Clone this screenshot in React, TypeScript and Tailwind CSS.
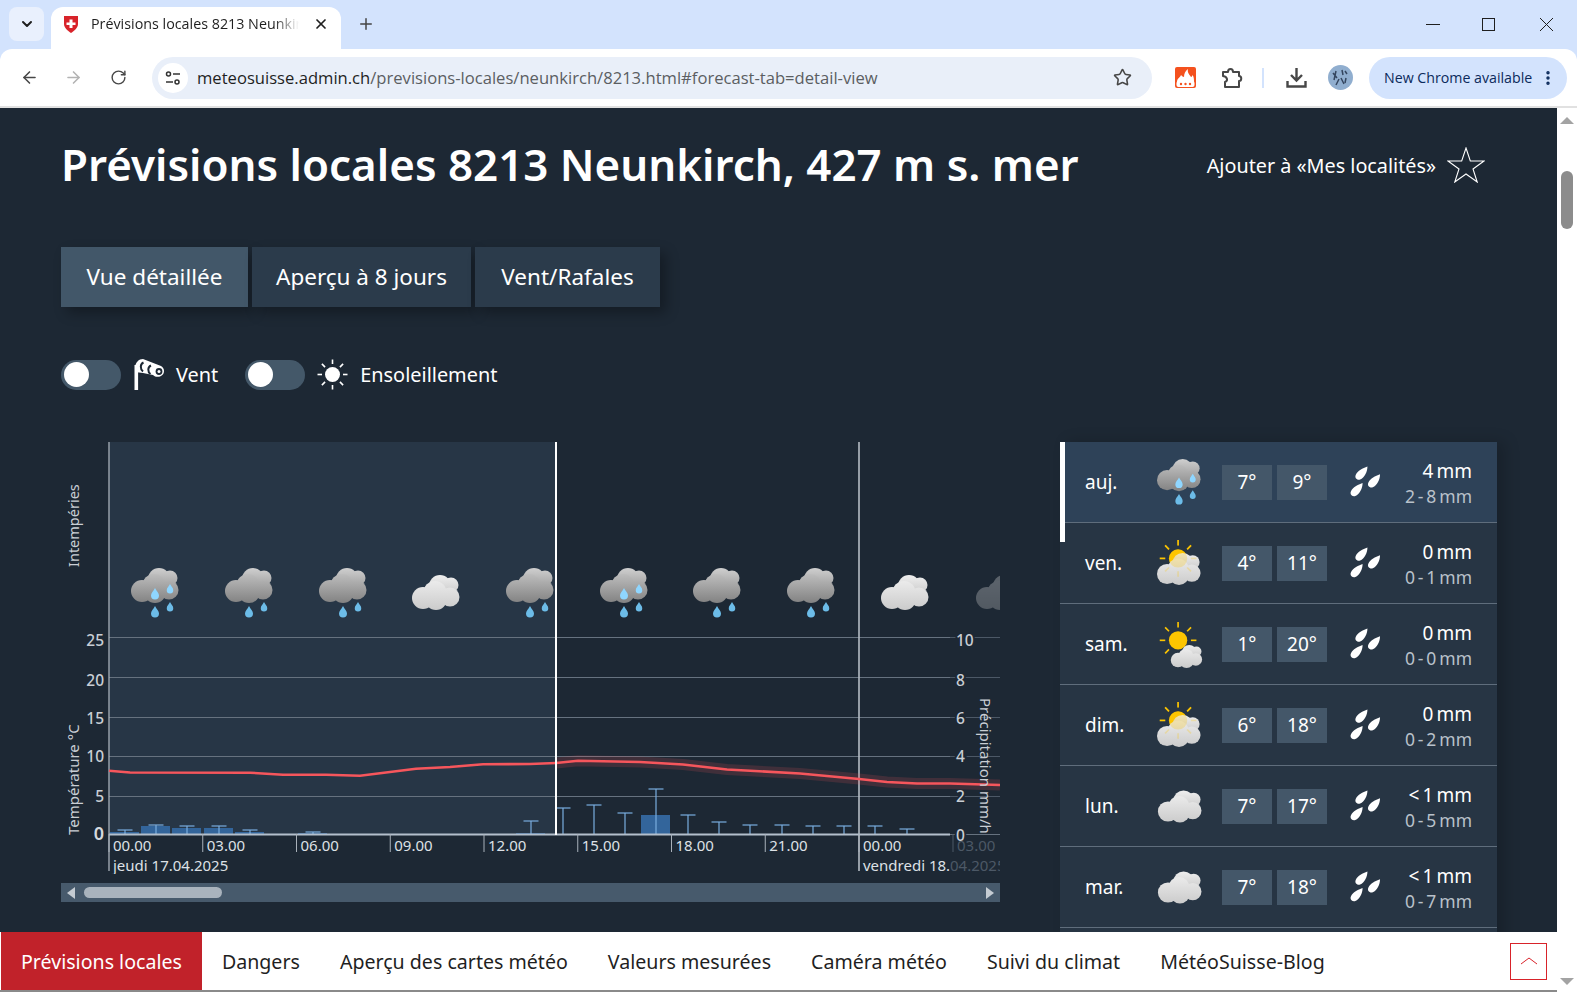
import React from 'react';
import { ArrowLeft, ArrowRight, RotateCw, Star, X, Plus, ChevronDown, MoreVertical } from 'lucide-react';

const HOURS = ['00.00', '03.00', '06.00', '09.00', '12.00', '15.00', '18.00', '21.00', '00.00'];

// y of the line, baseline of the labels
const GRID = [
  { y: 637.5, label: 645.5, left: '25', right: '10' },
  { y: 677.5, label: 685.5, left: '20', right: '8' },
  { y: 717.5, label: 723.5, left: '15', right: '6' },
  { y: 756.5, label: 762, left: '10', right: '4' },
  { y: 796.5, label: 802, left: '5', right: '2' },
];

// x, top of the whisker, height of the bar
const PRECIP = [
  [125, 830, 2], [156, 825, 8], [187, 826, 6], [219, 826, 6], [250, 830, 2], [313, 832, 1],
  [531, 821, 1], [563, 808, 0], [594, 805, 0], [625, 813, 0], [656, 789, 19], [688, 815, 0],
  [719, 822, 0], [750, 825, 0], [782, 825, 0], [813, 826, 0], [844, 826, 0], [875, 826, 0], [907, 829, 0],
];

const TEMP_PAST = '109,770.7 130,772.5 250,772.7 283,774.7 326,774.7 360,775.7 416,768.7 450,767 483,764.3 530,764 556,763';
const TEMP_FUTURE = '556,763 578,760.7 640,762 683,764.5 727,769.5 800,773.5 859,779 887,782 917,783.5 950,783.5 1000,785';

const DAYS = [
  { day: 'auj.', icon: 'rain', lo: '7°', hi: '9°', mm: '4', range: '2\u2009-\u20098', active: true },
  { day: 'ven.', icon: 'sunCloud', lo: '4°', hi: '11°', mm: '0', range: '0\u2009-\u20091' },
  { day: 'sam.', icon: 'sunSmall', lo: '1°', hi: '20°', mm: '0', range: '0\u2009-\u20090' },
  { day: 'dim.', icon: 'sunCloud', lo: '6°', hi: '18°', mm: '0', range: '0\u2009-\u20092' },
  { day: 'lun.', icon: 'cloud', lo: '7°', hi: '17°', mm: '<\u20091', range: '0\u2009-\u20095' },
  { day: 'mar.', icon: 'cloud', lo: '7°', hi: '18°', mm: '<\u20091', range: '0\u2009-\u20097' },
];

const NAV = ['Dangers', 'Aperçu des cartes météo', 'Valeurs mesurées', 'Caméra météo', 'Suivi du climat', 'MétéoSuisse-Blog'];

const TABS = [
  { label: 'Vue détaillée', width: 'w-[187px]', bg: 'bg-[#425769]' },
  { label: 'Aperçu à 8 jours', width: 'w-[219px]', bg: 'bg-[#2b3b4b]' },
  { label: 'Vent/Rafales', width: 'w-[185px]', bg: 'bg-[#2b3b4b]' },
];

const Cloud = ({ back, front }: { back: string; front: string }) => (
  <>
    <g fill={`url(#${back})`}>
      <circle cx="28" cy="11" r="11" />
      <circle cx="39" cy="10" r="7.5" />
      <circle cx="33" cy="14" r="8" />
    </g>
    <g fill={`url(#${front})`}>
      <circle cx="11" cy="23" r="11" />
      <circle cx="23" cy="17.5" r="11.5" />
      <circle cx="38" cy="22" r="9.5" />
      <circle cx="24" cy="24" r="11" />
    </g>
  </>
);

const Drop = ({ x, y, s, fill }: { x: number; y: number; s: number; fill: string }) => (
  <path
    d={`M${x} ${y} C${x + s * 0.2} ${y + s * 0.4} ${x + s * 0.5} ${y + s * 0.6} ${x + s * 0.5} ${y + s * 0.95} A${s * 0.5} ${s * 0.5} 0 0 1 ${x - s * 0.5} ${y + s * 0.95} C${x - s * 0.5} ${y + s * 0.6} ${x - s * 0.2} ${y + s * 0.4} ${x} ${y}Z`}
    fill={fill}
  />
);

const Sun = ({ cx, cy, r, ray }: { cx: number; cy: number; r: number; ray: number }) => (
  <>
    {[0, 45, 90, 135, 180, 225, 270, 315].map(a => (
      <line
        key={a}
        x1={cx + Math.cos((a * Math.PI) / 180) * (r + 4)}
        y1={cy + Math.sin((a * Math.PI) / 180) * (r + 4)}
        x2={cx + Math.cos((a * Math.PI) / 180) * (r + 4 + ray)}
        y2={cy + Math.sin((a * Math.PI) / 180) * (r + 4 + ray)}
        stroke="#fdc500"
        strokeWidth="1.8"
      />
    ))}
    <circle cx={cx} cy={cy} r={r} fill="#fdc500" />
  </>
);

const WeatherIcon = ({ kind, wet }: { kind: string; wet?: boolean }) => {
  if (kind === 'rain') {
    return (
      <>
        <Cloud back="wxBackDark" front="wxFrontDark" />
        {wet && <Drop x={24} y={20} s={8} fill="#8fd6ff" />}
        {wet && <Drop x={39} y={16} s={6.5} fill="#8fd6ff" />}
        <Drop x={24} y={38} s={8} fill="#6cbce8" />
        <Drop x={39} y={34} s={6.5} fill="#6cbce8" />
      </>
    );
  }
  if (kind === 'cloud') return <Cloud back="wxBackLight" front="wxFrontLight" />;
  if (kind === 'sunCloud') {
    return (
      <g transform="translate(0 14)">
        <Sun cx={23} cy={6} r={10} ray={6} />
        <Cloud back="wxBackLight" front="wxFrontLight" />
        <g opacity="0.25">
          <Sun cx={23} cy={6} r={10} ray={6} />
        </g>
      </g>
    );
  }
  return (
    <>
      <Sun cx={23} cy={21} r={10} ray={6} />
      <g transform="translate(15 26) scale(0.72)">
        <Cloud back="wxBackLight" front="wxFrontLight" />
      </g>
    </>
  );
};

const ForecastChart = () => (
  <svg width="939" height="432" viewBox="61 442 939 432" className="block">
    <rect x="109" y="442" width="447" height="392" fill="#273646" />

    {GRID.map(g => (
      <g key={g.y}>
        <line x1="109" x2="950" y1={g.y} y2={g.y} stroke="#66727f" strokeWidth="1.2" />
        <line x1="950" x2="1000" y1={g.y} y2={g.y} stroke="#4c5866" strokeWidth="1" />
        <text x="104" y={g.label} textAnchor="end" className="fill-[#c9ced4] text-[15.5px] font-medium">{g.left}</text>
        <text x="956" y={g.label} className="fill-[#c9ced4] text-[15.5px] font-medium stroke-[#1d2834] stroke-[4px] [paint-order:stroke]">{g.right}</text>
      </g>
    ))}
    <text x="104" y="840" textAnchor="end" className="fill-[#d5d9de] text-[18px] font-semibold">0</text>

    <line x1="109" x2="109" y1="442" y2="871" stroke="#a9b1ba" strokeWidth="1.3" />
    <line x1="859" x2="859" y1="442" y2="871" stroke="#b5bcc4" strokeWidth="1.6" />

    {/* weather icons every 3 hours */}
    {[155, 249, 343, 436, 530, 624, 717, 811, 905].map((x, i) => {
      const plain = i === 3 || i === 8;
      return (
        <svg key={x} x={x - 24} y={plain ? 575 : 568} width="48" height="50" viewBox="0 0 48 50">
          <WeatherIcon kind={plain ? 'cloud' : 'rain'} wet={i === 0 || i === 5} />
        </svg>
      );
    })}
    <g opacity="0.3">
      <svg x="976" y="575" width="24" height="50" viewBox="0 0 24 50">
        <WeatherIcon kind="cloud" />
      </svg>
    </g>

    {/* precipitation */}
    {PRECIP.map(([x, top, h]) => (
      <g key={x}>
        {h > 0 && <rect x={x - 15} y={834 - h} width="29" height={h} fill="#33659b" />}
        <line x1={x} x2={x} y1={top} y2="834" stroke="#7aaee0" strokeWidth="1.2" />
        <line x1={x - 7.5} x2={x + 7.5} y1={top} y2={top} stroke="#7aaee0" strokeWidth="1.2" />
      </g>
    ))}

    {/* temperature */}
    <polyline points={TEMP_FUTURE} fill="none" stroke="#f6565c" strokeWidth="11" opacity="0.16" />
    <polyline points={TEMP_PAST} fill="none" stroke="#f6565c" strokeWidth="2.6" />
    <polyline points={TEMP_FUTURE} fill="none" stroke="#f6565c" strokeWidth="2.6" />

    <line x1="109" x2="950" y1="834.5" y2="834.5" stroke="#b4bfcc" strokeWidth="2" />
    <line x1="950" x2="1000" y1="834.5" y2="834.5" stroke="#66727f" strokeWidth="1" />
    <line x1="556" x2="556" y1="442" y2="835" stroke="#ffffff" strokeWidth="2" />
    <text x="956" y="841" className="fill-[#c9ced4] text-[15.5px] font-medium stroke-[#1d2834] stroke-[4px] [paint-order:stroke]">0</text>

    {HOURS.map((h, i) => {
      const x = 109 + i * 93.75;
      return (
        <g key={i}>
          <line x1={x} x2={x} y1="834" y2="852" stroke="#a9b1ba" strokeWidth="1" />
          <text x={x + 4} y="851" className="fill-[#dde1e6] text-[15px]">{h}</text>
        </g>
      );
    })}
    <line x1="953" x2="953" y1="834" y2="852" stroke="#4c5866" strokeWidth="1" />
    <text x="957" y="851" className="fill-[#4c5866] text-[15px]">03.00</text>

    <text x="113" y="871" className="fill-[#dde1e6] text-[15px]">jeudi 17.04.2025</text>
    <text x="863" y="871" className="fill-[#dde1e6] text-[15px]">vendredi 18.</text>
    <text x="950" y="871" className="fill-[#4c5866] text-[15px]">04.2025</text>

    <text transform="translate(78.5 567) rotate(-90)" className="fill-[#c9ced4] text-[14.5px]">Intempéries</text>
    <text transform="translate(78.5 835) rotate(-90)" className="fill-[#c9ced4] text-[15px]">Température °C</text>
    <text transform="translate(980 698) rotate(90)" className="fill-[#c9ced4] text-[15px]">Précipitation mm/h</text>
  </svg>
);

const WindIcon = () => (
  <svg width="31" height="31" viewBox="0 0 31 31">
    <rect x="0.5" y="6" width="3.6" height="25" fill="#fff" />
    <path d="M1 10 C1 3 5 0 9 0 L27 7 C31 9 31 15 27 17 C24 18.5 21 18 19 16 L9 14 L1 13Z" fill="#fff" />
    <path d="M9.5 3.5 C6 5 6 10 9 12.5" fill="none" stroke="#1d2834" strokeWidth="2" />
    <path d="M17 6.5 C13.5 8 13.5 13 16.5 15" fill="none" stroke="#1d2834" strokeWidth="2" />
    <circle cx="25" cy="12.5" r="3.4" fill="#1d2834" />
    <circle cx="25" cy="12.5" r="1.5" fill="#fff" />
  </svg>
);

const SunIcon = () => (
  <svg width="31" height="31" viewBox="0 0 31 31">
    <circle cx="15.5" cy="15.5" r="7.5" fill="#fff" />
    {[0, 45, 90, 135, 180, 225, 270, 315].map(a => (
      <line
        key={a}
        x1={15.5 + Math.cos((a * Math.PI) / 180) * 10.5}
        y1={15.5 + Math.sin((a * Math.PI) / 180) * 10.5}
        x2={15.5 + Math.cos((a * Math.PI) / 180) * 15}
        y2={15.5 + Math.sin((a * Math.PI) / 180) * 15}
        stroke="#fff"
        strokeWidth="1.6"
      />
    ))}
  </svg>
);

const DropsIcon = () => {
  const d = 'M17 0 C17 5 14 12 9.5 13.5 C6 14.5 3.5 11.5 5 8.5 C7 4 12 2 17 0Z';
  return (
    <svg width="31" height="32" viewBox="-1 0 32 32" fill="#fff">
      <path d={d} />
      <path d={d} transform="translate(13 8)" />
      <path d={d} transform="translate(-5 17)" />
    </svg>
  );
};

const Toggle = () => (
  <div className="w-[60px] h-[30px] rounded-full bg-[#445869] flex items-center pl-[3px]">
    <div className="w-[25px] h-[25px] rounded-full bg-white" />
  </div>
);

const ChromeBar = () => (
  <div className="shrink-0 text-[#1f1f1f]">
    {/* tab strip */}
    <div className="h-[49px] bg-[#d3e3fd] flex items-end pl-[9px]">
      <div className="w-[35px] h-[34px] mb-[8px] rounded-lg bg-[#e9f0fd] flex items-center justify-center">
        <ChevronDown size={16} strokeWidth={3} />
      </div>
      <div className="ml-[7px] w-[290px] h-[42px] bg-white rounded-t-xl flex items-center pl-[11px] pb-[8px]">
        <svg width="18" height="18" viewBox="0 0 18 18" className="shrink-0">
          <path d="M2 1 H16 V9 C16 13 12 16 9 18 C6 16 2 13 2 9Z" fill="#d8232a" />
          <path d="M7.5 4.5 H10.5 V7.5 H13.5 V10 H10.5 V13 H7.5 V10 H4.5 V7.5 H7.5Z" fill="#fff" />
        </svg>
        <span className="ml-[11px] w-[208px] shrink-0 overflow-hidden whitespace-nowrap text-[14.3px] font-['Open_Sans'] [mask-image:linear-gradient(to_right,black_88%,transparent)]">
          Prévisions locales 8213 Neunkirch, 427 m s. mer
        </span>
        <X size={16} strokeWidth={2.6} className="ml-[14px] shrink-0" />
      </div>
      <Plus size={18} strokeWidth={2} className="ml-[16px] mb-[16px] text-[#444]" />
      <div className="ml-auto h-full flex items-start pt-[18px] pr-[24px]">
        <svg width="14" height="13" viewBox="0 0 14 13" fill="none" stroke="#1f1f1f" strokeWidth="1">
          <path d="M0 6.5 H14" />
        </svg>
        <svg width="13" height="13" viewBox="0 0 13 13" fill="none" stroke="#1f1f1f" strokeWidth="1" className="ml-[42px]">
          <rect x="0.5" y="0.5" width="12" height="12" />
        </svg>
        <svg width="13" height="13" viewBox="0 0 13 13" fill="none" stroke="#1f1f1f" strokeWidth="1" className="ml-[45px]">
          <path d="M0 0 L13 13 M13 0 L0 13" />
        </svg>
      </div>
    </div>
    {/* toolbar */}
    <div className="h-[57px] bg-white rounded-t-xl flex items-center pl-[20px] text-[#474747]">
      <ArrowLeft size={19} strokeWidth={2} />
      <ArrowRight size={19} strokeWidth={2} className="ml-[25px] text-[#b3b3b3]" />
      <RotateCw size={17} strokeWidth={2} className="ml-[27px]" />
      <div className="ml-[25px] w-[1000px] h-[42px] rounded-full bg-[#e9eff9] flex items-center pl-[6px] pr-[20px]">
        <div className="w-[30px] h-[30px] rounded-full bg-white flex items-center justify-center">
          <svg width="16" height="16" viewBox="0 0 16 16" fill="none" stroke="#333" strokeWidth="1.5">
            <circle cx="3.5" cy="4" r="2" />
            <path d="M8 4 H15" />
            <circle cx="12" cy="12" r="2" />
            <path d="M1 12 H8" />
          </svg>
        </div>
        <span className="ml-[9px] pt-[2px] text-[16.6px] font-['Open_Sans'] whitespace-nowrap text-[#1f1f1f]">
          meteosuisse.admin.ch<span className="text-[#5b5e62]">/previsions-locales/neunkirch/8213.html#forecast-tab=detail-view</span>
        </span>
        <Star size={19} strokeWidth={2} className="ml-auto text-[#474747]" />
      </div>
      <div className="ml-[23px] w-[21px] h-[21px] rounded-[2px] bg-[#f4511e] overflow-hidden">
        <svg width="21" height="21" viewBox="0 0 21 21" className="block">
          <path d="M2 15 C2 11 5 11 6 8 C7 9 8 10 9 10 C9 7 10 4 13 2 C12 6 15 8 16 10 C17 10 17 9 17.5 8 C19 10 19 12 19 15Z" fill="#fff" />
          <rect x="1.5" y="14" width="18" height="6" rx="2" fill="#fff" />
          <circle cx="6" cy="17" r="1.2" fill="#f4511e" />
          <circle cx="10.5" cy="17" r="1.2" fill="#f4511e" />
          <circle cx="15" cy="17" r="1.2" fill="#f4511e" />
        </svg>
      </div>
      <svg width="22" height="22" viewBox="0 0 22 22" fill="none" stroke="#474747" strokeWidth="2" className="ml-[25px]">
        <path d="M2 5 H7 C7 1 12 1 12 5 H18 V9 C21 9 21 14 18 14 V20 H4 V15 C7 14 7 10 2 9Z" strokeLinejoin="round" />
      </svg>
      <div className="ml-[19px] w-[2px] h-[20px] bg-[#d3e3fd]" />
      <svg width="21" height="21" viewBox="0 0 21 21" fill="none" stroke="#474747" strokeWidth="2.4" className="ml-[22px]">
        <path d="M10.5 1 V13 M5 8 L10.5 13.5 L16 8" />
        <path d="M1.5 14 V19.5 H19.5 V14" />
      </svg>
      <svg width="25" height="25" viewBox="0 0 25 25" className="ml-[21px]">
        <circle cx="12.5" cy="12.5" r="12.5" fill="#90aecf" />
        <path d="M5 8 L9 13 M8 6 L6 15 M11 14 L8 20 M14 5 L15 10 M17 6 L19 9 M13 13 L16 19 M18 13 L17 18" stroke="#34465f" strokeWidth="1.5" />
      </svg>
      <div className="ml-[16px] w-[198px] h-[42px] rounded-full bg-[#d3e3fd] flex items-center pl-[15px] text-[#0b2a5b]">
        <span className="text-[14.2px] font-['Open_Sans'] whitespace-nowrap">New Chrome available</span>
        <MoreVertical size={18} strokeWidth={2.6} className="ml-auto mr-[10px]" />
      </div>
    </div>
    <div className="h-[2px] bg-[#e1e1e1]" />
  </div>
);

const DayRow = ({ d }: { d: (typeof DAYS)[number] }) => (
  <div className={`h-[81px] shrink-0 border-b border-[#5f6d7c] flex items-center pl-[25px] ${d.active ? 'bg-[#2e4258]' : 'bg-[#273544]'}`}>
    <span className="w-[72px] text-[19px] text-white">{d.day}</span>
    <svg width="44" height="46" viewBox="0 0 48 50" className="overflow-visible">
      <g transform={d.icon === 'cloud' ? 'translate(1 8)' : undefined}>
        <WeatherIcon kind={d.icon} wet={d.active} />
      </g>
    </svg>
    <div className="ml-[21px] w-[50px] h-[35px] bg-[#445769] flex items-center justify-center text-[19px] text-white">{d.lo}</div>
    <div className="ml-[5px] w-[50px] h-[35px] bg-[#445769] flex items-center justify-center text-[19px] text-white">{d.hi}</div>
    <div className="ml-[23px]"><DropsIcon /></div>
    <div className="ml-auto pr-[25px] pt-[3px] flex flex-col items-end leading-[25px]">
      <span className="text-[19px] text-white">{d.mm}{'\u2009'}mm</span>
      <span className="text-[17.5px] text-[#b9c1ca]">{d.range}{'\u2009'}mm</span>
    </div>
  </div>
);

export default function App() {
  return (
    <div className="w-[1577px] h-[992px] overflow-hidden flex flex-col bg-[#d3e3fd] font-['Noto_Sans',sans-serif]">
      <svg width="0" height="0" className="block">
        <defs>
          <linearGradient id="wxBackDark" gradientUnits="userSpaceOnUse" x1="0" y1="0" x2="0" y2="22">
            <stop offset="0" stopColor="#cfcfcf" /><stop offset="1" stopColor="#9a9a9a" />
          </linearGradient>
          <linearGradient id="wxFrontDark" gradientUnits="userSpaceOnUse" x1="0" y1="6" x2="0" y2="35">
            <stop offset="0" stopColor="#bdbdbd" /><stop offset="1" stopColor="#828282" />
          </linearGradient>
          <linearGradient id="wxBackLight" gradientUnits="userSpaceOnUse" x1="0" y1="0" x2="0" y2="22">
            <stop offset="0" stopColor="#efefef" /><stop offset="1" stopColor="#c4c4c4" />
          </linearGradient>
          <linearGradient id="wxFrontLight" gradientUnits="userSpaceOnUse" x1="0" y1="6" x2="0" y2="35">
            <stop offset="0" stopColor="#ebebeb" /><stop offset="1" stopColor="#cbcbcb" />
          </linearGradient>
        </defs>
      </svg>

      <ChromeBar />

      <div className="flex-1 min-h-0 flex bg-white">
        <div className="w-[1557px] flex flex-col min-h-0">
          {/* page */}
          <main className="flex-1 min-h-0 overflow-hidden bg-[#1d2834] pl-[61px] text-white">
            <div className="flex items-center h-[114px] pr-[72px]">
              <h1 className="text-[43.9px] font-semibold leading-none whitespace-nowrap">Prévisions locales 8213 Neunkirch, 427 m s. mer</h1>
              <span className="ml-auto pt-[2px] text-[19.8px] whitespace-nowrap">Ajouter à «Mes localités»</span>
              <svg width="38" height="36" viewBox="0 0 38 36" fill="none" stroke="#fff" strokeWidth="1.1" className="ml-[11px]">
                <path d="M19 1 L23.3 14 L37 14 L26 22 L30.2 35 L19 27 L7.8 35 L12 22 L1 14 L14.7 14Z" />
              </svg>
            </div>

            <div className="mt-[25px] flex gap-[4px] text-[22.5px]">
              {TABS.map(t => (
                <button
                  key={t.label}
                  className={`h-[60px] whitespace-nowrap shadow-[6px_6px_12px_rgba(0,0,0,0.3)] ${t.width} ${t.bg}`}
                >
                  {t.label}
                </button>
              ))}
            </div>

            <div className="mt-[52px] flex items-center text-[19.9px]">
              <Toggle />
              <div className="ml-[13px]"><WindIcon /></div>
              <span className="ml-[11px]">Vent</span>
              <div className="ml-[27px]"><Toggle /></div>
              <div className="ml-[12px]"><SunIcon /></div>
              <span className="ml-[12px]">Ensoleillement</span>
            </div>

            <div className="mt-[52px] flex">
              <div className="w-[939px] shrink-0">
                <ForecastChart />
                <div className="mt-[9px] h-[19px] bg-[#475a6c] flex items-center pl-[6px] pr-[6px]">
                  <div className="w-0 h-0 border-y-[6px] border-y-transparent border-r-[8px] border-r-[#c5ccd3]" />
                  <div className="ml-[9px] w-[138px] h-[11px] rounded-full bg-[#a9b3bd]" />
                  <div className="ml-auto w-0 h-0 border-y-[6px] border-y-transparent border-l-[8px] border-l-[#c5ccd3]" />
                </div>
              </div>

              <div className="ml-[60px] w-[437px] shrink-0 relative flex flex-col shadow-[8px_0_14px_rgba(0,0,0,0.18)]">
                <div className="absolute left-0 top-0 w-[5px] h-[100px] bg-white" />
                {DAYS.map(d => <DayRow key={d.day} d={d} />)}
                <div className="h-[20px] bg-[#273544]" />
              </div>
            </div>
          </main>

          {/* bottom nav */}
          <nav className="h-[58px] shrink-0 bg-white flex items-center text-[19.6px] text-[#1f1f1f]">
            <a className="ml-px h-full px-[20px] pt-[2px] bg-[#c1222a] text-white flex items-center whitespace-nowrap">Prévisions locales</a>
            {NAV.map(n => (
              <a key={n} className="px-[20px] pt-[2px] whitespace-nowrap">{n}</a>
            ))}
            <div className="ml-auto mr-[10px] w-[37px] h-[37px] border border-[#d8232a] flex items-center justify-center">
              <svg width="16" height="8" viewBox="0 0 16 8" fill="none" stroke="#d8232a" strokeWidth="1">
                <path d="M0 7 L8 1 L16 7" />
              </svg>
            </div>
          </nav>
          <div className="h-[2px] shrink-0 bg-[#8a8a8a]" />
        </div>

        {/* scrollbar */}
        <div className="w-[20px] bg-white flex flex-col items-center pt-[9px]">
          <div className="w-0 h-0 border-x-[7px] border-x-transparent border-b-[7px] border-b-[#a3a3a3]" />
          <div className="mt-[47px] w-[12px] h-[58px] rounded-full bg-[#8c8c8c]" />
          <div className="mt-auto mb-[7px] w-0 h-0 border-x-[7px] border-x-transparent border-t-[7px] border-t-[#a3a3a3]" />
        </div>
      </div>
    </div>
  );
}
